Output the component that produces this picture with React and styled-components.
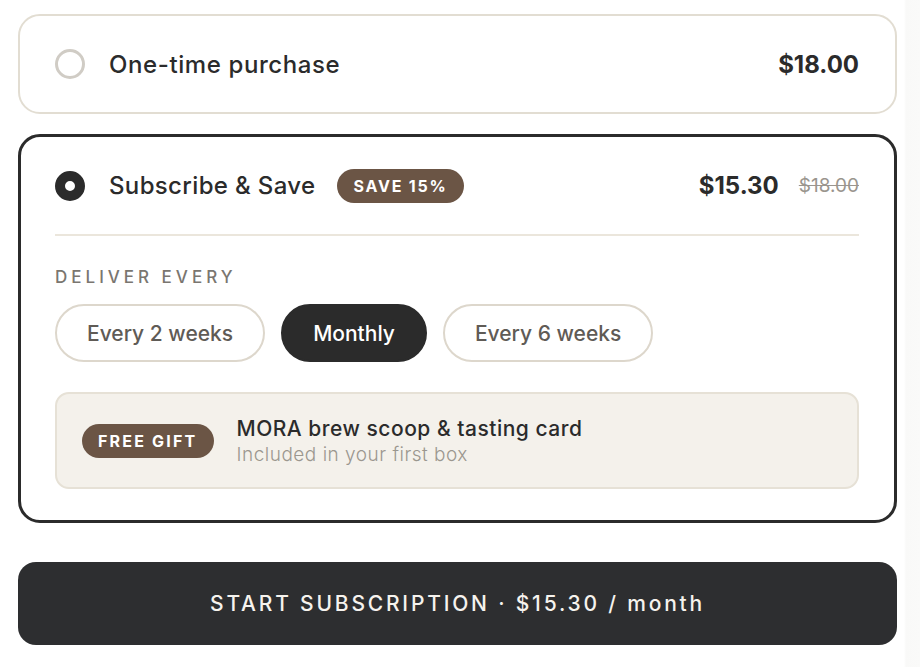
import React, { useState } from "react";
import styled, { createGlobalStyle, css } from "styled-components";

const Global = createGlobalStyle`
  html, body { margin: 0; padding: 0; background: #ffffff; }
  body { font-family: Inter, "Noto Sans", "Liberation Sans", sans-serif; color: #2b2b2b; }
  * { box-sizing: border-box; }
`;

const Page = styled.div`
  width: 920px;
  min-height: 667px;
  padding: 14px 0 0 18px;
  background: linear-gradient(to right, #ffffff 0, #ffffff 904px, #f9f9f8 906px, #fafaf9 920px);
`;

const Stack = styled.div`
  width: 879px;
  display: flex;
  flex-direction: column;
`;

const Card = styled.div`
  background: #fff;
  border-radius: 22px;
  ${(p) =>
    p.$active
      ? css`
          border: 3px solid #2b2b2b;
          padding: 0 35px 31px 34px;
          margin-top: 20px;
        `
      : css`
          border: 2px solid #e2ddd2;
          padding: 0 36px 0 35px;
        `}
`;

const Header = styled.div`
  height: ${(p) => (p.$active ? 97 : 96)}px;
  display: flex;
  align-items: center;
`;

const Radio = styled.span`
  width: 30px;
  height: 30px;
  border-radius: 50%;
  flex: none;
  ${(p) =>
    p.$checked
      ? css`
          border: 10px solid #2b2b2b;
          background: #fff;
        `
      : css`
          border: 3px solid #d0ccc5;
          background: #fff;
        `}
`;

const Title = styled.span`
  margin-left: 24px;
  font-size: 24px;
  font-weight: 500;
  color: #2b2b2b;
  letter-spacing: ${(p) => p.$ls ?? 0.6}px;
`;

const Badge = styled.span`
  display: inline-flex;
  align-items: center;
  justify-content: center;
  height: 34px;
  padding: 0 16px;
  border-radius: 17px;
  background: #6b5545;
  color: #fff;
  font-size: 16px;
  font-weight: 700;
  letter-spacing: ${(p) => p.$ls || 1.8}px;
  flex: none;
  ${(p) => p.$gap && css`margin-left: ${p.$gap}px;`}
`;

const Spacer = styled.div`
  flex: 1;
`;

const Price = styled.span`
  font-size: 24px;
  font-weight: 700;
  color: #2b2b2b;
`;

const OldPrice = styled.span`
  margin-left: 20px;
  font-size: 19px;
  font-weight: 400;
  color: #9a958e;
  text-decoration: line-through;
`;

const Divider = styled.div`
  height: 2px;
  background: #ebe6dc;
`;

const Label = styled.div`
  margin-top: 31px;
  height: 20px;
  line-height: 20px;
  font-size: 17px;
  font-weight: 500;
  letter-spacing: 4px;
  color: #7a7670;
`;

const Pills = styled.div`
  margin-top: 17px;
  display: flex;
  gap: 16px;
`;

const Pill = styled.button`
  height: 58px;
  padding: 0 30px;
  border-radius: 29px;
  font-family: inherit;
  font-size: 21px;
  font-weight: 500;
  cursor: pointer;
  ${(p) =>
    p.$active
      ? css`
          background: #2b2b2b;
          border: 2px solid #2b2b2b;
          color: #fff;
        `
      : css`
          background: #fff;
          border: 2px solid #ddd7cc;
          color: #5f5b56;
        `}
`;

const Gift = styled.div`
  margin-top: 30px;
  height: 97px;
  border: 2px solid #e6e1d6;
  border-radius: 14px;
  background: #f4f1eb;
  display: flex;
  align-items: center;
  padding-left: 25px;
`;

const GiftText = styled.div`
  margin-left: 23px;
  display: flex;
  flex-direction: column;
`;

const GiftTitle = styled.div`
  font-size: 21px;
  font-weight: 500;
  color: #2b2b2b;
  letter-spacing: 0.5px;
  line-height: 27px;
`;

const GiftSub = styled.div`
  font-size: 19px;
  font-weight: 300;
  color: #9b978f;
  letter-spacing: 0.5px;
  line-height: 25px;
`;

const CTA = styled.button`
  margin-top: 39px;
  height: 83px;
  width: 100%;
  border: none;
  border-radius: 18px;
  background: #2d2e30;
  color: #f6f3ee;
  font-family: inherit;
  font-size: 21px;
  font-weight: 500;
  letter-spacing: 2.8px;
  cursor: pointer;
`;

const options = ["Every 2 weeks", "Monthly", "Every 6 weeks"];

export default function App() {
  const [freq, setFreq] = useState("Monthly");
  return (
    <>
      <Global />
      <Page>
        <Stack>
          <Card>
            <Header>
              <Radio />
              <Title>One-time purchase</Title>
              <Spacer />
              <Price>$18.00</Price>
            </Header>
          </Card>
          <Card $active>
            <Header $active>
              <Radio $checked />
              <Title $ls={0.35}>Subscribe &amp; Save</Title>
              <Badge $gap={22}>SAVE 15%</Badge>
              <Spacer />
              <Price>$15.30</Price>
              <OldPrice>$18.00</OldPrice>
            </Header>
            <Divider />
            <Label>DELIVER EVERY</Label>
            <Pills>
              {options.map((o) => (
                <Pill key={o} $active={o === freq} onClick={() => setFreq(o)}>
                  {o}
                </Pill>
              ))}
            </Pills>
            <Gift>
              <Badge $ls={2.2}>FREE GIFT</Badge>
              <GiftText>
                <GiftTitle>MORA brew scoop &amp; tasting card</GiftTitle>
                <GiftSub>Included in your first box</GiftSub>
              </GiftText>
            </Gift>
          </Card>
          <CTA>START SUBSCRIPTION · $15.30 / month</CTA>
        </Stack>
      </Page>
    </>
  );
}
